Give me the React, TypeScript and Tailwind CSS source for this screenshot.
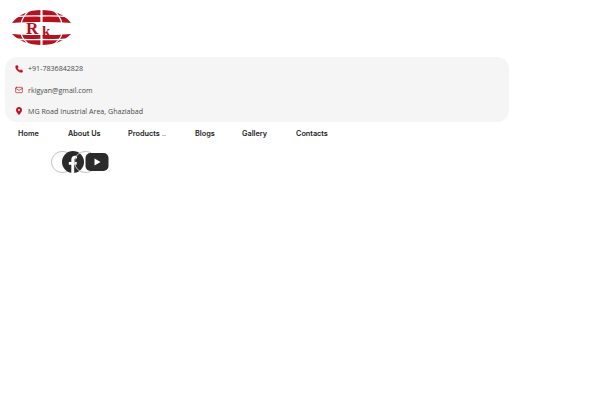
import { Phone, Mail } from 'lucide-react'

function Pin() {
  return (
    <svg width="8" height="8" viewBox="0 0 8 8" className="shrink-0">
      <path
        fillRule="evenodd"
        d="M4 0 C2 0 1 1.5 1 3 C1 5 4 8 4 8 C4 8 7 5 7 3 C7 1.5 6 0 4 0 Z M4 2 A1 1 0 1 1 4 4 A1 1 0 1 1 4 2 Z"
        fill="#c0121f"
      />
    </svg>
  )
}

const contacts = [
  { icon: <Phone size={8} strokeWidth={2} className="text-[#c0121f] fill-[#c0121f] shrink-0" />, label: '+91-7836842828' },
  { icon: <Mail size={8} strokeWidth={2} className="text-[#c0121f] shrink-0" />, label: 'rkigyan@gmail.com' },
  { icon: <Pin />, label: 'MG Road Inustrial Area, Ghaziabad' },
]

const links = [
  { label: 'Home', className: 'w-[50px]' },
  { label: 'About Us', className: 'w-[60px]' },
  { label: 'Products', className: 'w-[67px]', caret: true },
  { label: 'Blogs', className: 'w-[47px]' },
  { label: 'Gallery', className: 'w-[54px]' },
  { label: 'Contacts', className: 'w-[60px]' },
]

function Logo() {
  return (
    <svg width="62" height="38" viewBox="0 0 62 38" className="block">
      <path d="M1 14 C8 5 18 1 30.5 1 C43 1 53 5 60 14 C50 13 40 13 30.5 13 C20 13 10 13 1 14 Z" fill="#b5121f" />
      <path d="M1 25 C10 26 20 26 30.5 26 C40 26 50 26 60 25 C53 32 43 36 30.5 36 C18 36 8 32 1 25 Z" fill="#b5121f" />
      <g fill="none" stroke="#ffffff">
        <path d="M30.5 0 V14 M30.5 25 V37" strokeWidth="2.2" />
        <path d="M4 8 C14 6.5 22 7 30 7 C40 7 48 6.5 57 8" strokeWidth="1.3" />
        <path d="M4 30 C14 31 22 30.5 30 30.5 C40 30.5 48 31 57 30" strokeWidth="1.3" />
        <path d="M20 0 C15 4 11 9 10 15 M41 0 C46 4 50 9 51 15" strokeWidth="1.3" />
        <path d="M10 24 C11 30 15 34 22 38 M51 24 C50 30 46 34 39 38" strokeWidth="1.3" />
      </g>
      <text x="15" y="24.5" fontFamily="'Liberation Serif', serif" fontSize="17" fontWeight="700" fill="#b5121f">R</text>
      <text x="31" y="26.5" fontFamily="'Liberation Serif', serif" fontSize="15" fontWeight="700" fill="#b5121f">k</text>
    </svg>
  )
}

function Social({ children }: { children: React.ReactNode }) {
  return (
    <div className="relative w-[23px] h-[22px] rounded-full border border-[#c4c4c4]">
      <div className="absolute left-[10px] top-[-1px]">{children}</div>
    </div>
  )
}

export default function App() {
  return (
    <div className="min-h-[400px] bg-white font-['Open_Sans',sans-serif]">
      <div className="pl-[11px] pt-[9px] h-[57px]">
        <Logo />
      </div>

      <div className="mx-[5px] w-[504px] h-[65px] rounded-[12px] bg-[#f5f5f5] pl-[10px] pt-[1px] flex flex-col justify-center">
        {contacts.map(({ icon, label }) => (
          <div key={label} className="flex items-center gap-[5px] h-[21.5px] text-[7.1px] font-medium text-[#4a4a4a]">
            {icon}
            <span>{label}</span>
          </div>
        ))}
      </div>

      <nav className="flex items-center pl-[18px] pt-[1px] h-[24px] font-['Inter',sans-serif] text-[7.3px] font-semibold text-[#222222]">
        {links.map(link => (
          <div key={link.label} className={`${link.className} shrink-0 flex items-center`}>
            <span className={link.caret ? 'w-[34px] shrink-0' : ''}>{link.label}</span>
            {link.caret && <span className="w-[4px] h-px mt-[2px] bg-[#c4c4c4]" />}
          </div>
        ))}
      </nav>

      <div className="flex pl-[51px] pt-[5px]">
        <Social>
          <svg width="22" height="22" viewBox="0 0 22 22">
            <circle cx="11" cy="11" r="11" fill="#2b2b2b" />
            <path d="M9.3 22 V13.8 H6.8 V10.9 H9.3 V8.7 C9.3 6.2 10.8 4.8 13 4.8 C14 4.8 15 5 15 5 V7.4 H13.8 C12.6 7.4 12.2 8.1 12.2 8.9 V10.9 H14.9 L14.5 13.8 H12.2 V22 Z" fill="#ffffff" />
          </svg>
        </Social>
        <Social>
          <svg width="24" height="22" viewBox="0 0 24 22">
            <rect x="0.5" y="2" width="23" height="18" rx="5" fill="#2b2b2b" />
            <path d="M9.5 7.5 L15.5 11 L9.5 14.5 Z" fill="#ffffff" />
          </svg>
        </Social>
      </div>
    </div>
  )
}
